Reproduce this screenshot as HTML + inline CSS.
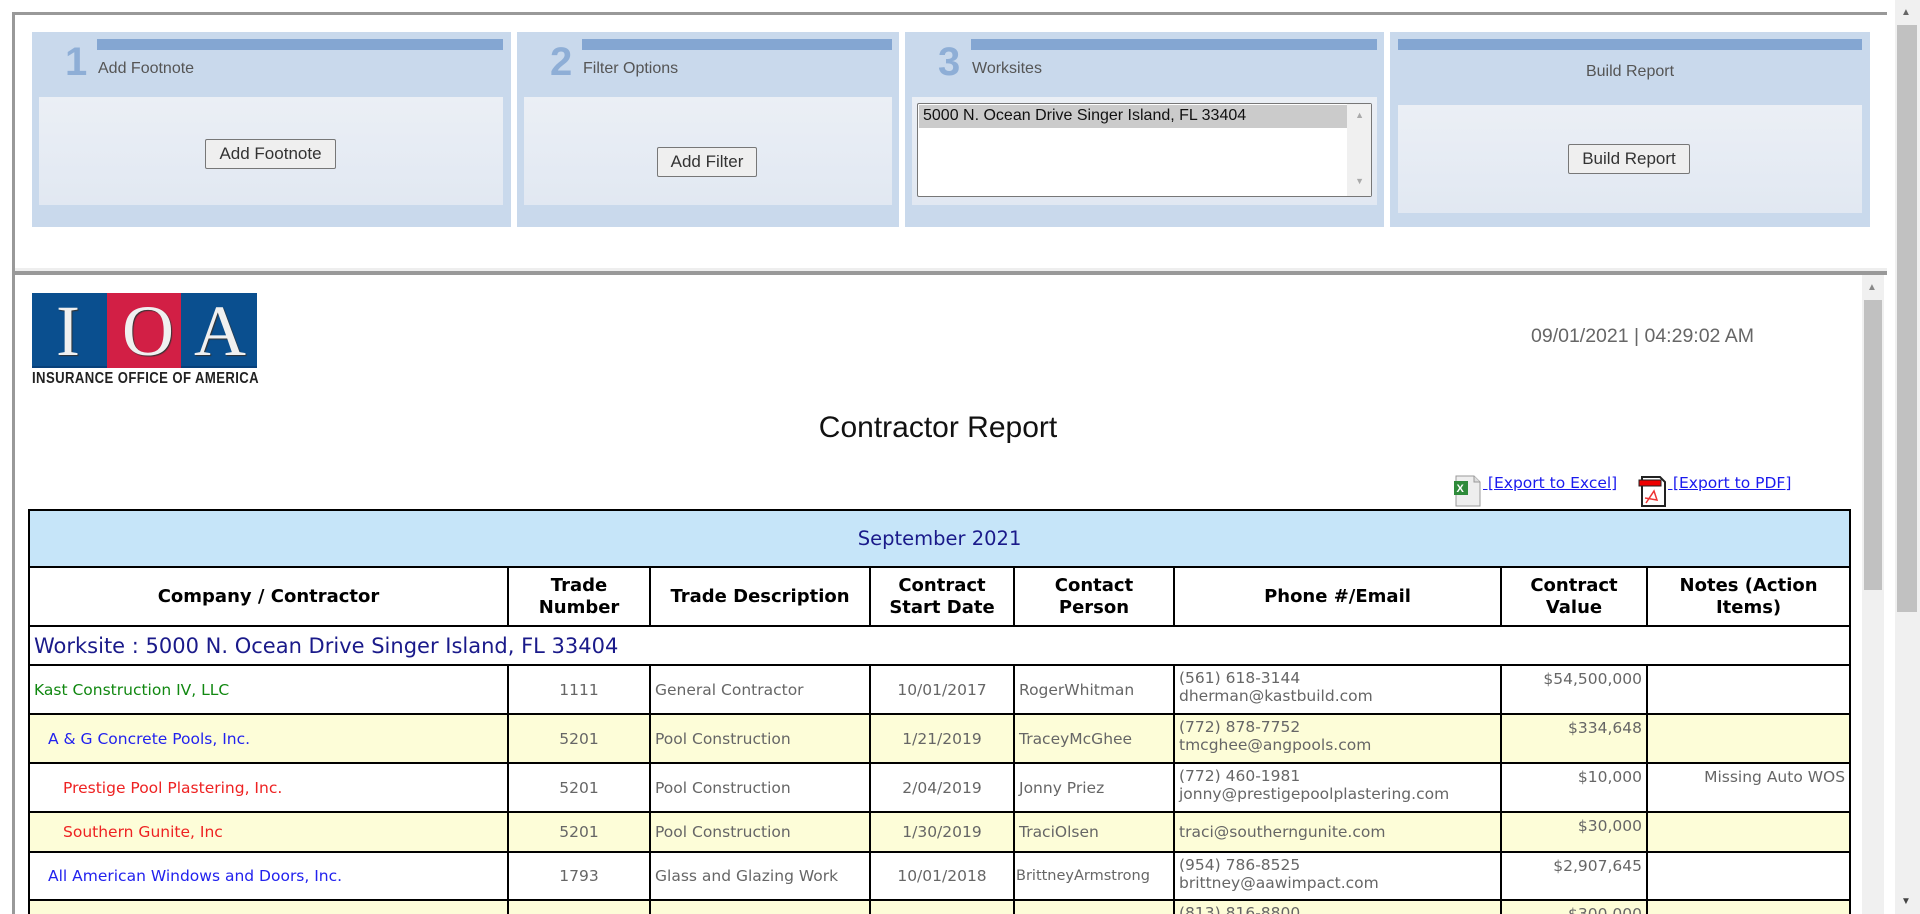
<!DOCTYPE html>
<html style="width:1920px;height:914px;overflow:hidden"><head><meta charset="utf-8"><style>
*{box-sizing:border-box;margin:0;padding:0}
body{width:1920px;height:914px;overflow:hidden;background:#fff;position:relative;font-family:"Liberation Sans",Arial,sans-serif}
.abs{position:absolute}
.panel{position:absolute;top:32px;height:195px;background:#c9d9ec}
.bar{position:absolute;top:7px;height:11px;background:#84a6d2}
.num{position:absolute;top:8px;font-size:40px;font-weight:bold;color:#8eaed6;font-family:"Liberation Sans",sans-serif}
.ttl{position:absolute;top:27px;font-size:16px;color:#555}
.inner{position:absolute;background:linear-gradient(#ebeff5,#e1e8f2)}
.btn{position:absolute;height:30px;border:1px solid #777;border-radius:2px;background:#efefef;font-size:17px;color:#333;text-align:center;line-height:28px}
table{position:absolute;left:28px;top:509px;width:1821px;border-collapse:collapse;table-layout:fixed;font-family:"DejaVu Sans",Verdana,sans-serif}
td,th{border:2px solid #000}
th{font-size:18px;font-weight:bold;color:#000;line-height:22px}
td{font-size:15.5px;color:#666;padding:0 4px}
.y td{background:#fdfdd8}
.c{text-align:center}.r{text-align:right;vertical-align:top;padding-top:4px}
.t{vertical-align:top;padding-top:3px;line-height:18px}
</style></head><body>
<div class="abs" style="left:13px;top:12px;width:1874px;height:3px;background:#999"></div>
<div class="abs" style="left:12px;top:12px;width:3px;height:902px;background:#999"></div>
<div class="abs" style="left:13px;top:271px;width:1874px;height:4px;background:#999"></div>
<div class="abs" style="left:15px;top:268px;width:1872px;height:3px;background:#eee"></div>
<div class="abs" style="left:1895px;top:0;width:25px;height:914px;background:#f0f0f0"></div>
<div class="abs" style="left:1897px;top:25px;width:20px;height:587px;background:#c1c1c1"></div>
<div class="abs" style="left:1901px;top:7px;font-size:10px;color:#666">▲</div>
<div class="abs" style="left:1901px;top:896px;font-size:10px;color:#444">▼</div>
<div class="abs" style="left:1862px;top:275px;width:22px;height:639px;background:#f0f0f0"></div>
<div class="abs" style="left:1864px;top:300px;width:18px;height:290px;background:#c1c1c1"></div>
<div class="abs" style="left:1867px;top:282px;font-size:10px;color:#888">▲</div>

<div class="panel" style="left:32px;width:479px">
 <div class="bar" style="left:65px;width:406px"></div>
 <div class="num" style="left:33px">1</div><div class="ttl" style="left:66px;top:28px">Add Footnote</div>
 <div class="inner" style="left:7px;top:65px;width:464px;height:108px"></div>
 <div class="btn" style="left:173px;top:107px;width:131px">Add Footnote</div>
</div>
<div class="panel" style="left:517px;width:382px">
 <div class="bar" style="left:65px;width:310px"></div>
 <div class="num" style="left:33px">2</div><div class="ttl" style="left:66px;top:28px">Filter Options</div>
 <div class="inner" style="left:7px;top:65px;width:368px;height:108px"></div>
 <div class="btn" style="left:140px;top:115px;width:100px">Add Filter</div>
</div>
<div class="panel" style="left:905px;width:479px">
 <div class="bar" style="left:66px;width:406px"></div>
 <div class="num" style="left:33px">3</div><div class="ttl" style="left:67px;top:28px">Worksites</div>
 <div class="inner" style="left:7px;top:65px;width:465px;height:108px"></div>
 <div class="abs" style="left:12px;top:71px;width:455px;height:94px;background:#fff;border:1px solid #777;border-radius:2px">
  <div class="abs" style="left:1px;top:1px;width:428px;height:23px;background:#cbcbcb;font-size:16px;color:#111;padding:2px 4px">5000 N. Ocean Drive Singer Island, FL 33404</div>
  <div class="abs" style="right:0;top:0;width:24px;height:92px;background:#f0f0f0"></div>
  <div class="abs" style="right:7px;top:6px;font-size:9px;color:#aaa">▲</div>
  <div class="abs" style="right:7px;top:72px;font-size:9px;color:#aaa">▼</div>
 </div>
</div>
<div class="panel" style="left:1390px;width:480px">
 <div class="bar" style="left:8px;width:464px"></div>
 <div class="ttl" style="left:0;width:480px;text-align:center;top:31px">Build Report</div>
 <div class="inner" style="left:8px;top:73px;width:464px;height:108px"></div>
 <div class="btn" style="left:178px;top:112px;width:122px">Build Report</div>
</div>

<div class="abs" style="left:32px;top:293px;width:225px;height:75px;background:#0a4f8f;border-bottom:2px solid #07407a"></div>
<div class="abs" style="left:107px;top:293px;width:74px;height:75px;background:#d21f45"></div>
<div class="abs" style="left:32px;top:290px;width:225px;height:80px;font-family:'Liberation Serif',serif;font-size:72px;color:#f0f0f0;text-shadow:1px 1px 1px #333">
 <span class="abs" style="left:24px;top:0">I</span><span class="abs" style="left:90px;top:0">O</span><span class="abs" style="left:162px;top:0">A</span></div>
<div class="abs" style="left:32px;top:370px;font-size:16px;font-weight:bold;color:#222;white-space:nowrap;transform:scaleX(0.82);transform-origin:0 0;width:320px;letter-spacing:0.5px">INSURANCE OFFICE OF AMERICA</div>

<div class="abs" style="left:1454px;top:325px;width:300px;text-align:right;font-size:19.5px;color:#666">09/01/2021 | 04:29:02 AM</div>
<div class="abs" style="left:700px;top:411px;width:476px;text-align:center;font-size:30px;color:#111">Contractor Report</div>

<svg class="abs" style="left:1453px;top:475px" width="30" height="32" viewBox="0 0 30 32"><path d="M3 1h18l6 6v24H3z" fill="#eee" stroke="#999"/><path d="M21 1v6h6" fill="#ddd" stroke="#999"/><rect x="1" y="6" width="14" height="14" fill="#2e8b3a"/><text x="3.5" y="17" font-size="11" fill="#fff" font-family="Liberation Sans" font-weight="bold">X</text></svg>
<div class="abs" style="left:1483px;top:474px;font-family:'DejaVu Sans',sans-serif;font-size:15.5px;color:#1a1aee;text-decoration:underline;white-space:nowrap">&nbsp;[Export to Excel]</div>
<svg class="abs" style="left:1638px;top:475px" width="30" height="32" viewBox="0 0 30 32"><path d="M4 2h18l5 5v24H4z" fill="#fff" stroke="#222" stroke-width="2"/><rect x="1" y="5" width="22" height="6" fill="#e00" stroke="#222"/><path d="M8 28l8-12 3 9-12-2" fill="none" stroke="#e33" stroke-width="1.5"/></svg>
<div class="abs" style="left:1668px;top:474px;font-family:'DejaVu Sans',sans-serif;font-size:15.5px;color:#1a1aee;text-decoration:underline;white-space:nowrap">&nbsp;[Export to PDF]</div>

<table>
<colgroup><col style="width:479px"><col style="width:142px"><col style="width:220px"><col style="width:144px"><col style="width:160px"><col style="width:327px"><col style="width:146px"><col style="width:203px"></colgroup>
<tr style="height:57px"><td colspan="8" style="background:#c6e5f9;text-align:center;font-size:19.5px;color:#1a1a8a">September 2021</td></tr>
<tr style="height:59px"><th>Company / Contractor</th><th>Trade<br>Number</th><th>Trade Description</th><th>Contract<br>Start Date</th><th>Contact<br>Person</th><th>Phone #/Email</th><th>Contract<br>Value</th><th>Notes (Action<br>Items)</th></tr>
<tr style="height:39px"><td colspan="8" style="font-size:21px;color:#1a1a8a;padding-left:4px">Worksite : 5000 N. Ocean Drive Singer Island, FL 33404</td></tr>
<tr style="height:49px"><td style="color:#118811;padding-left:4px">Kast Construction IV, LLC</td><td class="c">1111</td><td>General Contractor</td><td class="c">10/01/2017</td><td>RogerWhitman</td><td class="t">(561) 618-3144<br>dherman@kastbuild.com</td><td class="r">$54,500,000</td><td></td></tr>
<tr class="y" style="height:49px"><td style="color:#2222ee;padding-left:18px">A &amp; G Concrete Pools, Inc.</td><td class="c">5201</td><td>Pool Construction</td><td class="c">1/21/2019</td><td>TraceyMcGhee</td><td class="t">(772) 878-7752<br>tmcghee@angpools.com</td><td class="r">$334,648</td><td></td></tr>
<tr style="height:49px"><td style="color:#ee2222;padding-left:33px">Prestige Pool Plastering, Inc.</td><td class="c">5201</td><td>Pool Construction</td><td class="c">2/04/2019</td><td>Jonny Priez</td><td class="t" style="white-space:nowrap">(772) 460-1981<br>jonny@prestigepoolplastering.com</td><td class="r">$10,000</td><td class="r">Missing Auto WOS</td></tr>
<tr class="y" style="height:40px"><td style="color:#ee2222;padding-left:33px">Southern Gunite, Inc</td><td class="c">5201</td><td>Pool Construction</td><td class="c">1/30/2019</td><td>TraciOlsen</td><td>traci@southerngunite.com</td><td class="r">$30,000</td><td></td></tr>
<tr style="height:48px"><td style="color:#2222ee;padding-left:18px">All American Windows and Doors, Inc.</td><td class="c">1793</td><td>Glass and Glazing Work</td><td class="c">10/01/2018</td><td style="padding:0 1px;font-size:14.5px">BrittneyArmstrong</td><td class="t">(954) 786-8525<br>brittney@aawimpact.com</td><td class="r">$2,907,645</td><td></td></tr>
<tr class="y" style="height:49px"><td></td><td></td><td></td><td></td><td></td><td class="t">(813) 816-8800<br>&nbsp;</td><td class="r">$300,000</td><td></td></tr>
</table>
</body></html>
